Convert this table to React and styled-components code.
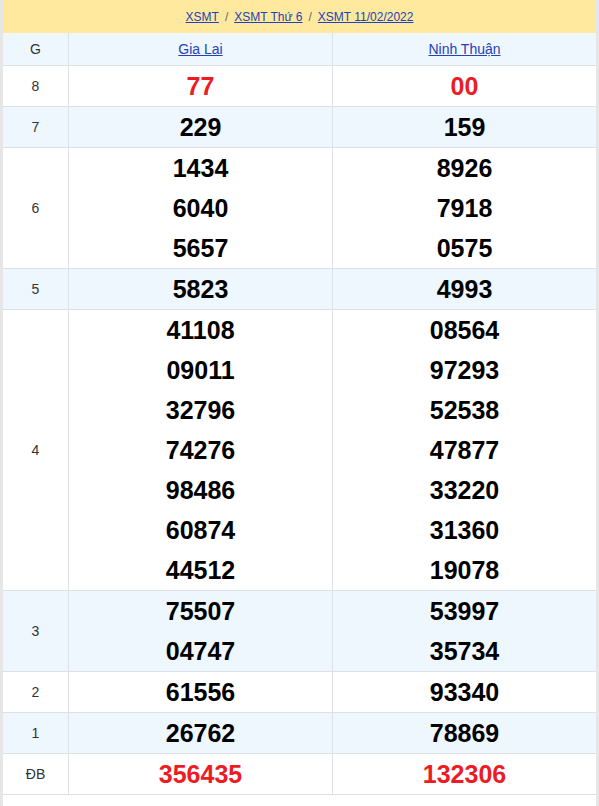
import React from "react";
import styled, { createGlobalStyle } from "styled-components";

const GlobalStyle = createGlobalStyle`
  body {
    margin: 0;
    background: #ffffff;
    font-family: "Liberation Sans", Arial, sans-serif;
  }
`;

const results = [
  { label: "8", a: ["77"], b: ["00"], red: true },
  { label: "7", a: ["229"], b: ["159"] },
  { label: "6", a: ["1434", "6040", "5657"], b: ["8926", "7918", "0575"] },
  { label: "5", a: ["5823"], b: ["4993"] },
  {
    label: "4",
    a: ["41108", "09011", "32796", "74276", "98486", "60874", "44512"],
    b: ["08564", "97293", "52538", "47877", "33220", "31360", "19078"],
  },
  { label: "3", a: ["75507", "04747"], b: ["53997", "35734"] },
  { label: "2", a: ["61556"], b: ["93340"] },
  { label: "1", a: ["26762"], b: ["78869"] },
  { label: "ĐB", a: ["356435"], b: ["132306"], red: true },
];

const App = () => {
  return (
    <Page>
      <GlobalStyle />
      <Breadcrumb>
        <a href="#">XSMT</a>
        <Sep>/</Sep>
        <a href="#">XSMT Thứ 6</a>
        <Sep>/</Sep>
        <a href="#">XSMT 11/02/2022</a>
      </Breadcrumb>
      <Table>
        <Row $shaded $head>
          <Label>G</Label>
          <HeadCell>
            <a href="#">Gia Lai</a>
          </HeadCell>
          <HeadCell>
            <a href="#">Ninh Thuận</a>
          </HeadCell>
        </Row>
        {results.map((r, i) => (
          <Row key={r.label} $shaded={i % 2 === 1}>
            <Label>{r.label}</Label>
            <Numbers>
              {r.a.map((n) => (
                <Num key={n} $red={r.red}>
                  {n}
                </Num>
              ))}
            </Numbers>
            <Numbers>
              {r.b.map((n) => (
                <Num key={n} $red={r.red}>
                  {n}
                </Num>
              ))}
            </Numbers>
          </Row>
        ))}
      </Table>
      <Spacer />
    </Page>
  );
};

const Page = styled.div`
  border-left: 3px solid #e6e6e6;
  border-right: 3px solid #e6e6e6;
  min-height: 806px;
  box-sizing: border-box;
  background: #ffffff;
`;

const Breadcrumb = styled.div`
  height: 33px;
  background: #fee99e;
  display: flex;
  align-items: center;
  justify-content: center;
  font-size: 12px;
  a {
    color: #2342b8;
    text-decoration: underline;
  }
`;

const Sep = styled.span`
  color: #666;
  margin: 0 6px;
`;

const Table = styled.div`
  display: flex;
  flex-direction: column;
`;

const Row = styled.div`
  display: grid;
  grid-template-columns: 65px 1fr 1fr;
  border-bottom: 1px solid #dde0e7;
  background: ${(p) => (p.$shaded ? "#eef6fe" : "#ffffff")};
  min-height: ${(p) => (p.$head ? "32px" : "40px")};
`;

const Label = styled.div`
  display: flex;
  align-items: center;
  justify-content: center;
  font-size: 14px;
  color: #333;
`;

const HeadCell = styled.div`
  border-left: 1px solid #dde0e7;
  display: flex;
  align-items: center;
  justify-content: center;
  font-size: 14px;
  a {
    color: #2342b8;
    text-decoration: underline;
  }
`;

const Numbers = styled.div`
  border-left: 1px solid #dde0e7;
  display: flex;
  flex-direction: column;
  align-items: center;
  justify-content: center;
`;

const Num = styled.div`
  height: 40px;
  line-height: 41px;
  font-family: "Liberation Sans", Arial, sans-serif;
  font-weight: 700;
  font-size: 25px;
  color: ${(p) => (p.$red ? "#ed1c24" : "#000000")};
`;

const Spacer = styled.div`
  height: 11px;
`;

export default App;
